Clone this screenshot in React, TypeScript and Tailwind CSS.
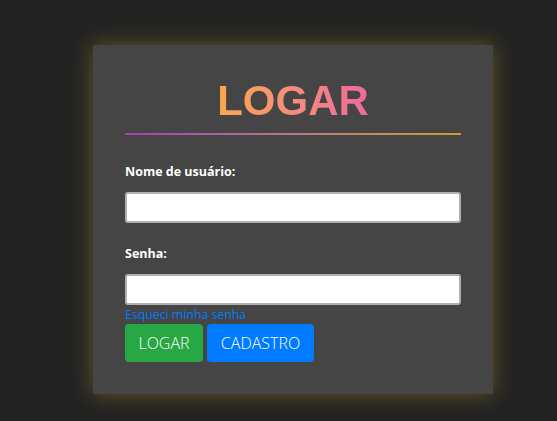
import { FC } from 'react';

const App: FC = () => {
  return (
    <div className="min-h-[421px] w-full bg-[#232323] pt-[45px] font-['Open_Sans',sans-serif]">
      <div className="ml-[93px] w-[400px] bg-[#454545] px-8 pt-8 pb-8 shadow-[0_0_20px_rgba(222,184,30,0.36)]">
        <h1 className="text-center font-['Liberation_Sans',Arial,sans-serif] text-[42px] font-bold leading-[48px]">
          <span className="inline-block bg-gradient-to-r from-[#fba946] to-[#ee6a9b] bg-clip-text text-transparent">
            LOGAR
          </span>
        </h1>
        <div className="mt-2 h-[2px] w-full bg-gradient-to-r from-[#a73cb5] to-[#c9a21a]" />

        <form className="mt-7 flex flex-col">
          <label className="text-[12.5px] font-bold leading-[18px] text-white">Nome de usuário:</label>
          <input
            type="text"
            className="mt-[11px] h-[31px] w-full rounded-[3px] border-2 border-[#b0b0b0] bg-white outline-none"
          />
          <label className="mt-[22px] text-[12.5px] font-bold leading-[18px] text-white">Senha:</label>
          <input
            type="password"
            className="mt-[11px] h-[31px] w-full rounded-[3px] border-2 border-[#b0b0b0] bg-white outline-none"
          />
          <a href="#" className="text-[12.3px] leading-[19px] text-[#007bff]">
            Esqueci minha senha
          </a>
          <div className="flex gap-1">
            <button
              type="button"
              className="h-[38px] w-[78px] rounded-[4px] bg-[#28a745] text-base font-light text-white"
            >
              LOGAR
            </button>
            <button
              type="button"
              className="h-[38px] w-[107px] rounded-[4px] bg-[#007bff] text-base font-light text-white"
            >
              CADASTRO
            </button>
          </div>
        </form>
      </div>
    </div>
  );
};

export default App;
